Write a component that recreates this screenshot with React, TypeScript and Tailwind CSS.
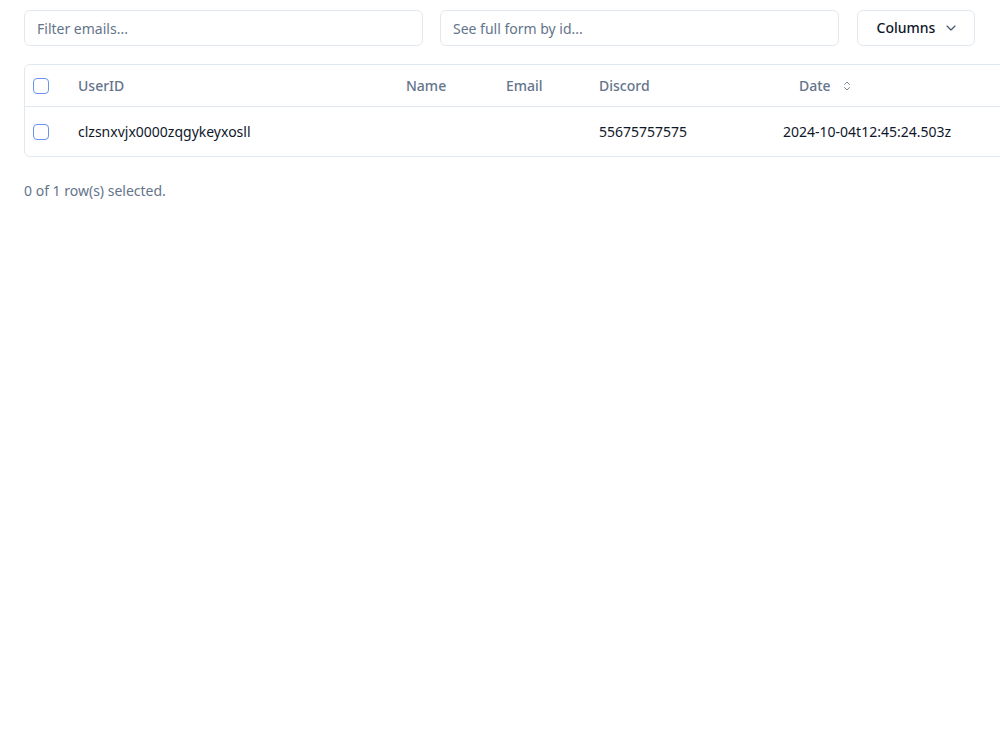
import React, { useState } from "react";
import { ChevronDown, ChevronsUpDown } from "lucide-react";

type Row = {
  id: string;
  name: string;
  email: string;
  discord: string;
  date: string;
};

const rows: Row[] = [
  {
    id: "clzsnxvjx0000zqgykeyxosll",
    name: "",
    email: "",
    discord: "55675757575",
    date: "2024-10-04t12:45:24.503z",
  },
];

function Box({ checked, onChange }: { checked: boolean; onChange: () => void }) {
  return (
    <button
      type="button"
      onClick={onChange}
      className="flex h-4 w-4 items-center justify-center rounded-[4px] border-[1.5px] border-[#6b93ee] bg-white"
    >
      {checked && <span className="h-2 w-2 rounded-[2px] bg-[#5f8ff0]" />}
    </button>
  );
}

export default function App() {
  const [emailFilter, setEmailFilter] = useState("");
  const [formId, setFormId] = useState("");
  const [selected, setSelected] = useState<string[]>([]);

  const toggle = (id: string) => {
    setSelected((s) => (s.includes(id) ? s.filter((x) => x !== id) : [...s, id]));
  };

  const allChecked = selected.length === rows.length && rows.length > 0;

  return (
    <div
      className="h-screen w-full overflow-hidden bg-white px-6 pt-[10px] text-[#0f172a]"
      style={{ fontFamily: '"Noto Sans", "Open Sans", sans-serif' }}
    >
      <div className="flex items-center">
        <input
          className="h-9 w-[399px] rounded-md border border-[#e2e8f0] bg-white px-3 text-sm text-[#0f172a] outline-none placeholder:text-[#64748b]"
          placeholder="Filter emails..."
          value={emailFilter}
          onChange={(e) => setEmailFilter(e.target.value)}
        />
        <input
          className="ml-[17px] h-9 w-[399px] rounded-md border border-[#e2e8f0] bg-white px-3 text-sm text-[#0f172a] outline-none placeholder:text-[#64748b]"
          placeholder="See full form by id..."
          value={formId}
          onChange={(e) => setFormId(e.target.value)}
        />
        <button className="ml-[18px] flex h-9 w-[118px] items-center justify-center gap-2 rounded-md border border-[#e2e8f0] bg-white pl-1 text-sm font-medium text-[#0f172a]">
          Columns
          <ChevronDown className="h-4 w-4 text-[#475569]" strokeWidth={1.75} />
        </button>
      </div>

      <div className="mt-[18px] w-[1000px] rounded-md border border-[#e2e8f0]">
        <table className="w-full border-collapse text-sm">
          <thead>
            <tr className="h-[41px] border-b border-[#e2e8f0]">
              <th className="w-[45px] px-2 pt-[2px] text-left">
                <Box
                  checked={allChecked}
                  onChange={() => setSelected(allChecked ? [] : rows.map((r) => r.id))}
                />
              </th>
              <th className="w-[328px] px-2 pt-[2px] text-left font-medium text-[#64748b]">UserID</th>
              <th className="w-[100px] px-2 pt-[2px] text-left font-medium text-[#64748b]">Name</th>
              <th className="w-[93px] px-2 pt-[2px] text-left font-medium text-[#64748b]">Email</th>
              <th className="w-[184px] px-2 pt-[2px] text-left font-medium text-[#64748b]">Discord</th>
              <th className="px-2 pt-[2px] text-left font-medium text-[#64748b]">
                <button className="flex items-center gap-[10px] px-4">
                  Date
                  <ChevronsUpDown className="h-3 w-3" strokeWidth={1.75} />
                </button>
              </th>
            </tr>
          </thead>
          <tbody>
            {rows.map((r) => (
              <tr key={r.id} className="h-[50px]">
                <td className="px-2 pt-[1px]">
                  <Box checked={selected.includes(r.id)} onChange={() => toggle(r.id)} />
                </td>
                <td className="px-2 pt-[1px]">{r.id}</td>
                <td className="px-2 pt-[1px]">{r.name}</td>
                <td className="px-2 pt-[1px]">{r.email}</td>
                <td className="px-2 pt-[1px]">{r.discord}</td>
                <td className="px-2 pt-[1px]">{r.date}</td>
              </tr>
            ))}
          </tbody>
        </table>
      </div>

      <div className="mt-[24px] text-sm text-[#64748b]">
        {selected.length} of {rows.length} row(s) selected.
      </div>
    </div>
  );
}
